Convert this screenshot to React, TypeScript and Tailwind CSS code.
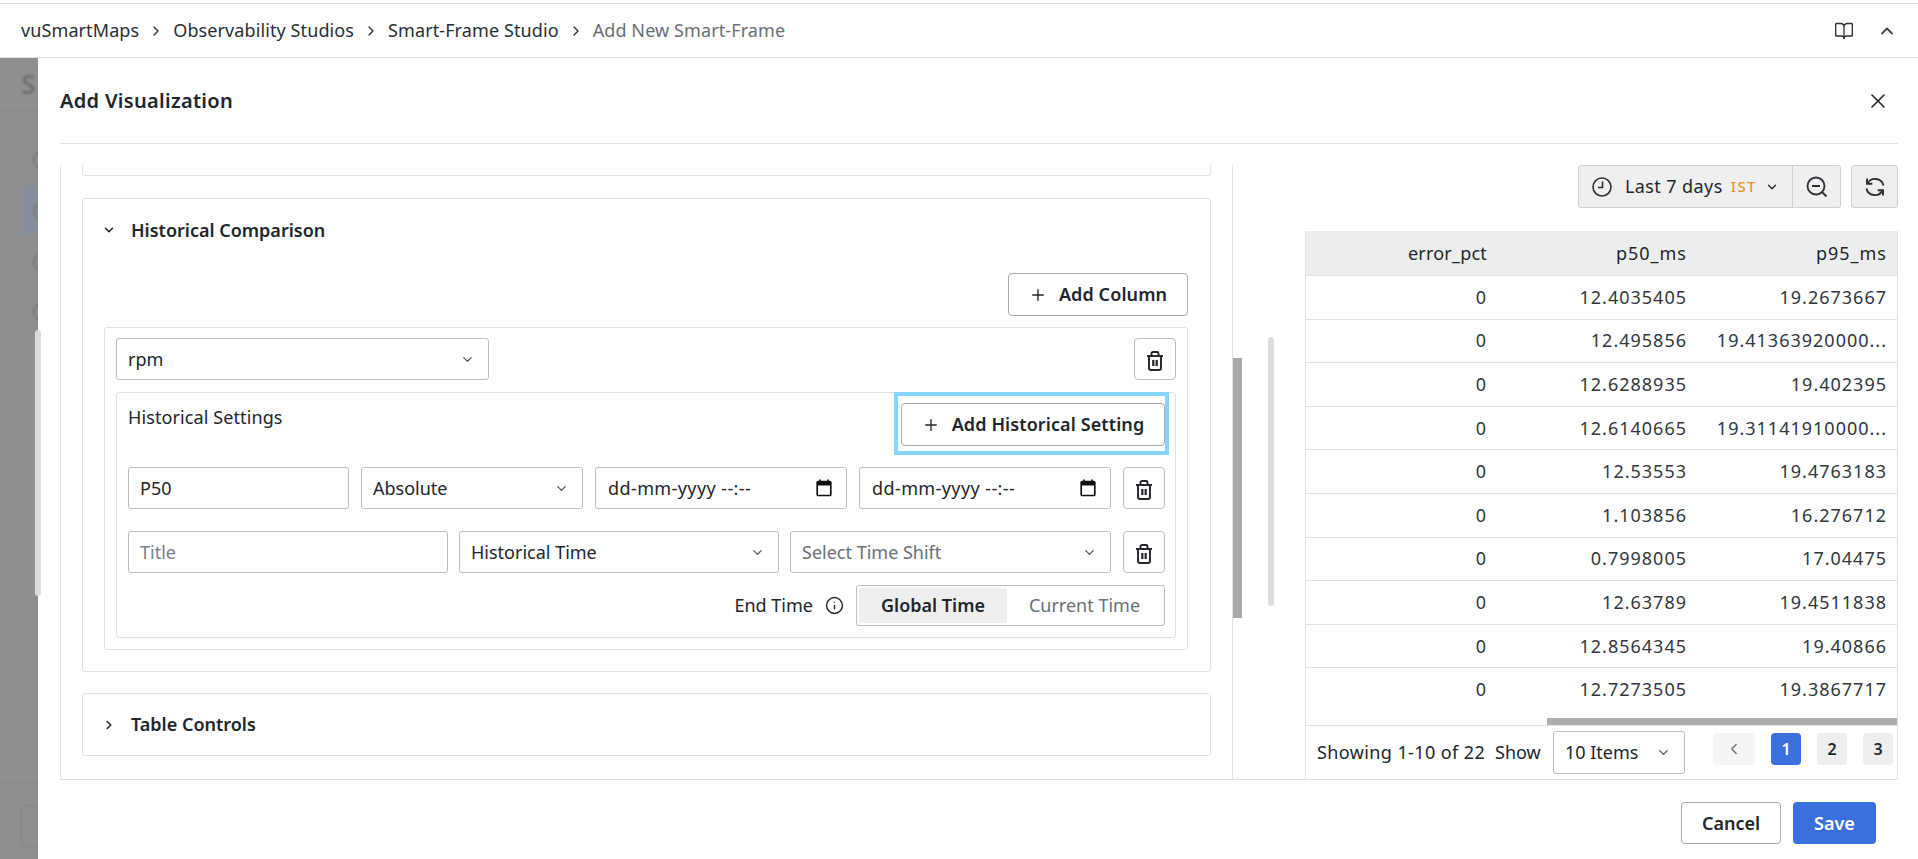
import React from "react";
import { BookOpen, ChevronDown, ChevronLeft, ChevronRight, ChevronUp, Info, Plus, X } from "lucide-react";

const crumbs = ["vuSmartMaps", "Observability Studios", "Smart-Frame Studio"];

const rows = [
  ["0", "12.4035405", "19.2673667"],
  ["0", "12.495856", "19.41363920000..."],
  ["0", "12.6288935", "19.402395"],
  ["0", "12.6140665", "19.31141910000..."],
  ["0", "12.53553", "19.4763183"],
  ["0", "1.103856", "16.276712"],
  ["0", "0.7998005", "17.04475"],
  ["0", "12.63789", "19.4511838"],
  ["0", "12.8564345", "19.40866"],
  ["0", "12.7273505", "19.3867717"],
];

const Calendar = () => (
  <svg width="16" height="18" viewBox="0 0 16 18" className="ml-auto">
    <path d="M4 0.5v3M12 0.5v3" stroke="#111" strokeWidth="1.6" />
    <rect x="1.2" y="2.5" width="13.6" height="14" rx="1" fill="none" stroke="#111" strokeWidth="1.7" />
    <rect x="1.2" y="2.5" width="13.6" height="4" fill="#111" />
  </svg>
);

const ClockIcon = () => (
  <svg width="20" height="20" viewBox="0 0 20 20" fill="none" stroke="#2b2f36" strokeWidth="1.6">
    <circle cx="10" cy="10" r="9" />
    <path d="M10.5 4.5V10.5H6" />
  </svg>
);

const ZoomOutIcon = () => (
  <svg width="22" height="22" viewBox="0 0 22 22" fill="none" stroke="#2b2f36" strokeWidth="1.8">
    <circle cx="10" cy="10" r="8.5" />
    <path d="M6 10H14M16 16L20.5 20.5" />
  </svg>
);

const SyncIcon = () => (
  <svg width="22" height="24" viewBox="0 0 22 24" fill="none" stroke="#2b2f36" strokeWidth="1.9">
    <path d="M3.5 8.5A8.6 8.6 0 0 1 19.5 10.5" />
    <path d="M3 3.5V8.8H8.3" />
    <path d="M2.5 13.5A8.6 8.6 0 0 0 18.5 15.5" />
    <path d="M13.7 15.2H19V20.5" />
  </svg>
);

const TrashIcon = () => (
  <svg width="18" height="20" viewBox="0 0 18 20" fill="none" stroke="#22262b" strokeWidth="1.9" className="mt-[4px]">
    <path d="M1 5H17" />
    <path d="M5.5 5V2.5C5.5 1.6 6.1 1 7 1H11C11.9 1 12.5 1.6 12.5 2.5V5" />
    <path d="M3 5V17C3 18.1 3.9 19 5 19H13C14.1 19 15 18.1 15 17V5" />
    <path d="M7.3 9V15M10.7 9V15" strokeWidth="2.2" />
  </svg>
);

const Select = ({ label, className, muted }: { label: string; className: string; muted?: boolean }) => (
  <div className={`flex h-[42px] shrink-0 items-center justify-between rounded-[3px] border border-[#bdbdbd] bg-white pl-[11px] pr-[13px] ${className}`}>
    <span className={muted ? "text-[#6b7075]" : "text-[#22262b]"}>{label}</span>
    <ChevronDown size={15} strokeWidth={2.2} className="text-[#555a60]" />
  </div>
);

const TrashButton = ({ className = "" }: { className?: string }) => (
  <div className={`flex h-[42px] w-[42px] shrink-0 items-center justify-center rounded-[4px] border border-[#bdbdbd] bg-white ${className}`}>
    <TrashIcon />
  </div>
);

const DateInput = () => (
  <div className="flex h-[42px] w-[252px] shrink-0 items-center rounded-[3px] border border-[#bdbdbd] pl-[12px] pr-[14px] text-[#22262b]">
    <span className="tracking-[0.4px]">dd-mm-yyyy --:--</span>
    <Calendar />
  </div>
);

const PageButton = ({ label, active }: { label: string; active?: boolean }) => (
  <div className={`flex h-[32px] w-[30px] items-center justify-center rounded-[4px] text-[16px] font-semibold ${active ? "bg-[#3b70dc] text-white" : "bg-[#eeeeee] text-[#22262b]"}`}>
    {label}
  </div>
);

export default function App() {
  return (
    <div className="flex h-[859px] w-full flex-col overflow-hidden bg-white text-[18px] text-[#22262b] [font-family:'Noto_Sans',sans-serif]">
      {/* Breadcrumb bar */}
      <div className="mt-[3px] flex h-[55px] shrink-0 items-center border-y border-[#e2e2e2] pl-[21px] pr-[21px]">
        {crumbs.map((c) => (
          <React.Fragment key={c}>
            <span className="tracking-[0.1px] text-[#2b3036]">{c}</span>
            <ChevronRight size={16} strokeWidth={2} className="mx-[9px] text-[#2b3036]" />
          </React.Fragment>
        ))}
        <span className="tracking-[0.1px] text-[#6b7075]">Add New Smart-Frame</span>
        <BookOpen size={20} strokeWidth={1.6} className="ml-auto text-[#2b3036]" />
        <ChevronUp size={20} strokeWidth={2.2} className="ml-[23px] text-[#444]" />
      </div>

      <div className="flex min-h-0 flex-1">
        {/* Dimmed page behind the drawer */}
        <div className="relative w-[38px] shrink-0 bg-[#8f8f8f]">
          <div className="absolute inset-0 overflow-hidden">
            <div className="absolute left-[21px] top-[6px] text-[27px] font-semibold text-[#6f7072] blur-[1px]">S</div>
            <div className="absolute left-0 right-0 top-[52px] border-t border-[#878787]" />
            <div className="absolute left-[22px] top-[127px] h-[49px] w-[16px] bg-[#878d9c] blur-[1px]" />
            <div className="absolute left-[33px] top-[93px] h-[18px] w-[18px] rounded-full border-2 border-[#777] blur-[1px]" />
            <div className="absolute left-[33px] top-[144px] h-[18px] w-[18px] rounded-full border-2 border-[#777] blur-[1px]" />
            <div className="absolute left-[33px] top-[195px] h-[18px] w-[18px] rounded-full border-2 border-[#777] blur-[1px]" />
            <div className="absolute left-[33px] top-[245px] h-[18px] w-[18px] rounded-full border-2 border-[#777] blur-[1px]" />
            <div className="absolute left-0 right-0 top-[724px] border-t border-[#878787]" />
            <div className="absolute left-[21px] top-[747px] h-[42px] w-[30px] rounded-[4px] border border-[#828282] blur-[1px]" />
          </div>
          {/* Page scrollbar, sits over the drawer edge */}
          <div className="absolute left-[35px] top-[272px] z-10 h-[266px] w-[6px] rounded-full bg-[#dcdcdc]" />
        </div>

        {/* Drawer */}
        <div className="flex min-w-0 flex-1 flex-col pl-[22px] pr-[20px]">
          <div className="flex h-[86px] shrink-0 items-center justify-between border-b border-[#e2e2e2]">
            <span className="text-[20px] font-semibold tracking-[0.3px] text-[#22262b]">Add Visualization</span>
            <X size={24} strokeWidth={1.6} className="mr-[8px] text-[#22262b]" />
          </div>

          <div className="mt-[21px] flex h-[615px] shrink-0 border-b border-[#e2e2e2]">
            {/* Left panel */}
            <div className="relative w-[1173px] shrink-0 border-x border-[#e2e2e2] px-[21px]">
              <div className="h-[11px] rounded-b-[3px] border-x border-b border-[#e2e2e2]" />

              <div className="mt-[22px] h-[474px] rounded-[3px] border border-[#e2e2e2] pl-[21px] pr-[22px]">
                <div className="flex h-[62px] items-center">
                  <ChevronDown size={14} strokeWidth={2.6} className="-ml-[2px] mr-[15px]" />
                  <span className="font-semibold">Historical Comparison</span>
                </div>
                <div className="mt-[12px] flex justify-end">
                  <div className="flex h-[43px] w-[180px] items-center justify-center gap-[12px] rounded-[4px] border border-[#a8a8a8] font-semibold tracking-[0.1px]">
                    <Plus size={18} strokeWidth={1.8} />
                    Add Column
                  </div>
                </div>

                <div className="mt-[11px] h-[323px] rounded-[3px] border border-[#e2e2e2] px-[11px] pt-[10px]">
                  <div className="flex items-center justify-between">
                    <Select label="rpm" className="w-[373px]" />
                    <TrashButton />
                  </div>

                  <div className="relative mt-[12px] h-[246px] rounded-[3px] border border-[#e2e2e2] px-[11px]">
                    <div className="flex h-[74px] items-start justify-between pt-[10px]">
                      <span className="mt-[1px] tracking-[0.1px]">Historical Settings</span>
                      <div className="-mr-[1px] flex h-[43px] w-[264px] items-center justify-center gap-[12px] rounded-[4px] border border-[#a8a8a8] font-semibold tracking-[0.1px]">
                        <Plus size={18} strokeWidth={1.8} />
                        Add Historical Setting
                      </div>
                    </div>
                    {/* Highlight annotation */}
                    <div className="absolute right-[6px] top-[-1px] h-[63px] w-[275px] border-[4px] border-[#85d5fd]" />

                    <div className="flex gap-[12px]">
                      <div className="flex h-[42px] w-[221px] shrink-0 items-center rounded-[3px] border border-[#bdbdbd] pl-[11px]">P50</div>
                      <Select label="Absolute" className="w-[222px]" />
                      <DateInput />
                      <DateInput />
                      <TrashButton />
                    </div>

                    <div className="mt-[22px] flex gap-[11px]">
                      <div className="flex h-[42px] w-[320px] shrink-0 items-center rounded-[3px] border border-[#bdbdbd] pl-[11px] text-[#7b8086]">Title</div>
                      <Select label="Historical Time" className="w-[320px]" />
                      <Select label="Select Time Shift" className="w-[321px]" muted />
                      <TrashButton className="ml-[1px]" />
                    </div>

                    <div className="-mr-[1px] mt-[12px] flex items-center justify-end">
                      <span>End Time</span>
                      <Info size={19} strokeWidth={1.8} className="ml-[12px] mr-[12px]" />
                      <div className="flex h-[41px] w-[309px] items-center rounded-[3px] border border-[#bdbdbd] px-[2px]">
                        <div className="flex h-[35px] w-[148px] items-center justify-center rounded-[2px] bg-[#eeeeee] font-semibold">Global Time</div>
                        <div className="flex flex-1 items-center justify-center text-[#6b7075]">Current Time</div>
                      </div>
                    </div>
                  </div>
                </div>
              </div>

              <div className="mt-[21px] flex h-[63px] items-center rounded-[3px] border border-[#e2e2e2] pl-[21px]">
                <ChevronRight size={14} strokeWidth={2.6} className="-ml-[2px] mr-[15px]" />
                <span className="font-semibold">Table Controls</span>
              </div>

              {/* Panel scrollbar */}
              <div className="absolute left-[1172px] top-[193px] h-[260px] w-[9px] bg-[#aaaaaa]" />
            </div>

            {/* Divider track */}
            <div className="flex w-[72px] shrink-0 justify-center pl-[4px]">
              <div className="mt-[172px] h-[269px] w-[6px] rounded-full bg-[#dddddd]" />
            </div>

            {/* Right panel */}
            <div className="flex min-w-0 flex-1 flex-col">
              <div className="flex justify-end gap-[10px]">
                <div className="flex h-[43px] w-[263px] items-center rounded-[3px] border border-[#cfcfcf] bg-[#efefef]">
                  <div className="flex h-full flex-1 items-center border-r border-[#cfcfcf] pl-[13px]">
                    <ClockIcon />
                    <span className="ml-[13px] tracking-[0.4px]">Last 7 days</span>
                    <span className="ml-[8px] text-[15px] font-medium tracking-[1.4px] text-[#e8912d]">IST</span>
                    <ChevronDown size={14} strokeWidth={2.4} className="ml-[8px]" />
                  </div>
                  <div className="flex w-[47px] justify-center">
                    <ZoomOutIcon />
                  </div>
                </div>
                <div className="flex h-[43px] w-[47px] items-center justify-center rounded-[3px] border border-[#cfcfcf] bg-[#efefef]">
                  <SyncIcon />
                </div>
              </div>

              <div className="relative mt-[23px] flex flex-1 flex-col border-x border-[#e2e2e2]">
                <div className="flex h-[44px] shrink-0 items-center bg-[#eceeee]">
                  <span className="w-[181px] text-right tracking-[0.2px]">error_pct</span>
                  <span className="w-[200px] text-right tracking-[1px]">p50_ms</span>
                  <span className="w-[200px] text-right tracking-[1px]">p95_ms</span>
                </div>
                {rows.map((r, i) => (
                  <div key={i} className="flex h-[43.6px] shrink-0 items-center border-t border-[#e2e2e2] tracking-[1px] text-[#33373c]">
                    <span className="w-[181px] text-right">{r[0]}</span>
                    <span className="w-[200px] text-right">{r[1]}</span>
                    <span className="w-[200px] whitespace-nowrap text-right">{r[2]}</span>
                  </div>
                ))}
                <div className="mt-[7px] flex h-[8px] shrink-0 justify-end border-b border-[#e2e2e2]">
                  <div className="h-full w-[350px] bg-[#aeaeae]" />
                </div>
                <div className="flex flex-1 items-center pl-[11px]">
                  <span className="w-[178px] whitespace-nowrap tracking-[0.4px]">Showing 1-10 of 22</span>
                  <span className="w-[58px]">Show</span>
                  <Select label="10 Items" className="h-[43px] w-[132px]" />
                  <div className="mb-[7px] ml-[28px] flex h-[32px] w-[42px] items-center justify-center rounded-[4px] bg-[#f4f5f5] text-[#666]">
                    <ChevronLeft size={18} strokeWidth={1.6} />
                  </div>
                  <div className="mb-[7px] ml-[16px] flex gap-[16px]">
                    <PageButton label="1" active />
                    <PageButton label="2" />
                    <PageButton label="3" />
                  </div>
                </div>
              </div>
            </div>
          </div>

          <div className="mt-[22px] flex justify-end gap-[12px] pr-[22px]">
            <div className="flex h-[42px] w-[100px] items-center justify-center rounded-[4px] border border-[#a8a8a8] font-semibold">Cancel</div>
            <div className="flex h-[42px] w-[83px] items-center justify-center rounded-[4px] bg-[#3b70dc] font-semibold text-white">Save</div>
          </div>
        </div>
      </div>
    </div>
  );
}
